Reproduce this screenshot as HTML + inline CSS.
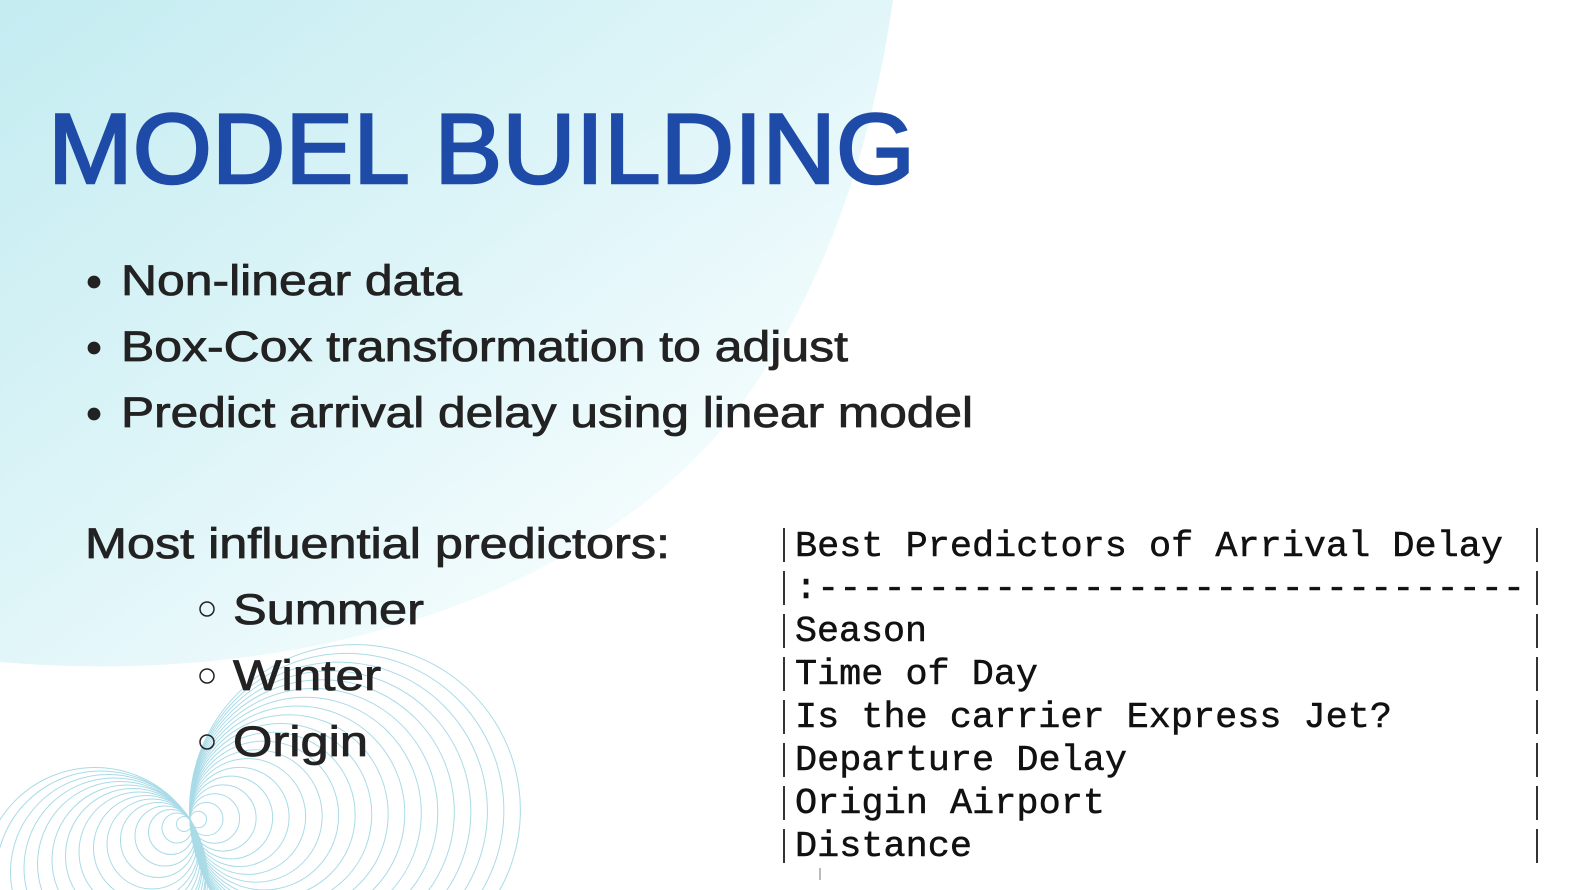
<!DOCTYPE html>
<html><head><meta charset="utf-8"><style>
html,body{margin:0;padding:0;background:#fff;width:1594px;height:890px;overflow:hidden;}
#wrap{position:relative;width:1594px;height:890px;overflow:hidden;}
svg{position:absolute;left:0;top:0;display:block;overflow:hidden}
</style></head><body><div id="wrap">
<svg width="1594" height="890" viewBox="0 0 1594 890" xmlns="http://www.w3.org/2000/svg">
<defs>
<linearGradient id="g" x1="0" y1="0" x2="1" y2="1" gradientUnits="objectBoundingBox">
<stop offset="0" stop-color="#c3ecf1"/>
<stop offset="0.45" stop-color="#def5f8"/>
<stop offset="0.8" stop-color="#f6fdfe"/>
<stop offset="1" stop-color="#ffffff"/>
</linearGradient>
<clipPath id="c"><rect x="0" y="0" width="1594" height="890"/></clipPath>
</defs>
<rect width="1594" height="890" fill="#fff"/>
<path d="M0,0 L893,0 C870,160 820,300 730,420 C600,580 330,690 0,662 Z" fill="url(#g)"/>
<g clip-path="url(#c)" fill="none" stroke="#a9dbe7" stroke-width="1">
<circle cx="198.25" cy="819.5" r="8.3"/>
<circle cx="206.5" cy="819" r="16.5"/>
<circle cx="214.75" cy="818.5" r="24.8"/>
<circle cx="223" cy="818" r="33.1"/>
<circle cx="231.25" cy="817.5" r="41.4"/>
<circle cx="239.5" cy="817" r="49.6"/>
<circle cx="247.75" cy="816.5" r="57.9"/>
<circle cx="256" cy="816" r="66.2"/>
<circle cx="264.25" cy="815.5" r="74.4"/>
<circle cx="272.5" cy="815" r="82.7"/>
<circle cx="280.75" cy="814.5" r="91"/>
<circle cx="289" cy="814" r="99.2"/>
<circle cx="297.25" cy="813.5" r="107.5"/>
<circle cx="305.5" cy="813" r="115.8"/>
<circle cx="313.75" cy="812.5" r="124"/>
<circle cx="322" cy="812" r="132.3"/>
<circle cx="330.25" cy="811.5" r="140.6"/>
<circle cx="338.5" cy="811" r="148.9"/>
<circle cx="346.75" cy="810.5" r="157.1"/>
<circle cx="355" cy="810" r="165.4"/>
<circle cx="184" cy="824" r="7.5"/>
<circle cx="177" cy="828" r="15"/>
<circle cx="171" cy="832" r="22.5"/>
<circle cx="165" cy="836" r="30"/>
<circle cx="158" cy="840" r="37.5"/>
<circle cx="152" cy="844" r="45"/>
<circle cx="146" cy="848" r="52.5"/>
<circle cx="139" cy="852" r="60"/>
<circle cx="133" cy="856" r="67.5"/>
<circle cx="127" cy="860" r="75"/>
<circle cx="120" cy="864" r="82.5"/>
<circle cx="114" cy="868" r="90"/>
<circle cx="108" cy="872" r="97.5"/>
<circle cx="101" cy="876" r="105"/>
<circle cx="95" cy="880" r="112.5"/>
</g>
<g font-family="'Liberation Sans', sans-serif">
<text x="48" y="183" font-size="99" fill="#1e4aa8" stroke="#1e4aa8" stroke-width="2.5" textLength="867" lengthAdjust="spacingAndGlyphs">MODEL BUILDING</text>
<g fill="#222" stroke="#222" stroke-width="0.8" font-size="43">
<circle cx="94" cy="282" r="6"/>
<text x="121" y="295" textLength="341" lengthAdjust="spacingAndGlyphs">Non-linear data</text>
<circle cx="94" cy="348" r="6"/>
<text x="121" y="361" textLength="727" lengthAdjust="spacingAndGlyphs">Box-Cox transformation to adjust</text>
<circle cx="94" cy="414" r="6"/>
<text x="121" y="427" textLength="852" lengthAdjust="spacingAndGlyphs">Predict arrival delay using linear model</text>
<text x="85" y="558" textLength="585" lengthAdjust="spacingAndGlyphs">Most influential predictors:</text>
<text x="233" y="624" textLength="191" lengthAdjust="spacingAndGlyphs">Summer</text>
<text x="233" y="690" textLength="148" lengthAdjust="spacingAndGlyphs">Winter</text>
<text x="233" y="756" textLength="135" lengthAdjust="spacingAndGlyphs">Origin</text>
</g>
<g fill="none" stroke="#222" stroke-width="1.5">
<circle cx="207" cy="609" r="7"/>
<circle cx="207" cy="676" r="7"/>
<circle cx="207" cy="742" r="7"/>
</g>
</g>
<g font-family="'Liberation Mono', monospace" font-size="36" fill="#111" stroke="#111" stroke-width="0.5">
<g stroke="#333" stroke-width="2">
<line x1="784" y1="528" x2="784" y2="562"/><line x1="1537" y1="528" x2="1537" y2="562"/>
<line x1="784" y1="571" x2="784" y2="605"/><line x1="1537" y1="571" x2="1537" y2="605"/>
<line x1="784" y1="614" x2="784" y2="648"/><line x1="1537" y1="614" x2="1537" y2="648"/>
<line x1="784" y1="657" x2="784" y2="691"/><line x1="1537" y1="657" x2="1537" y2="691"/>
<line x1="784" y1="700" x2="784" y2="734"/><line x1="1537" y1="700" x2="1537" y2="734"/>
<line x1="784" y1="743" x2="784" y2="777"/><line x1="1537" y1="743" x2="1537" y2="777"/>
<line x1="784" y1="786" x2="784" y2="820"/><line x1="1537" y1="786" x2="1537" y2="820"/>
<line x1="784" y1="829" x2="784" y2="863"/><line x1="1537" y1="829" x2="1537" y2="863"/>
<line x1="820" y1="868" x2="820" y2="880" stroke="#bbb"/>
</g>
<text x="795" y="556" textLength="708" lengthAdjust="spacingAndGlyphs">Best Predictors of Arrival Delay</text>
<text x="795" y="598" textLength="730" lengthAdjust="spacingAndGlyphs">:--------------------------------</text>
<text x="795" y="641" textLength="132" lengthAdjust="spacingAndGlyphs">Season</text>
<text x="795" y="684" textLength="243" lengthAdjust="spacingAndGlyphs">Time of Day</text>
<text x="795" y="727" textLength="597" lengthAdjust="spacingAndGlyphs">Is the carrier Express Jet?</text>
<text x="795" y="770" textLength="332" lengthAdjust="spacingAndGlyphs">Departure Delay</text>
<text x="795" y="813" textLength="310" lengthAdjust="spacingAndGlyphs">Origin Airport</text>
<text x="795" y="856" textLength="177" lengthAdjust="spacingAndGlyphs">Distance</text>
</g>
</svg>
</div></body></html>
